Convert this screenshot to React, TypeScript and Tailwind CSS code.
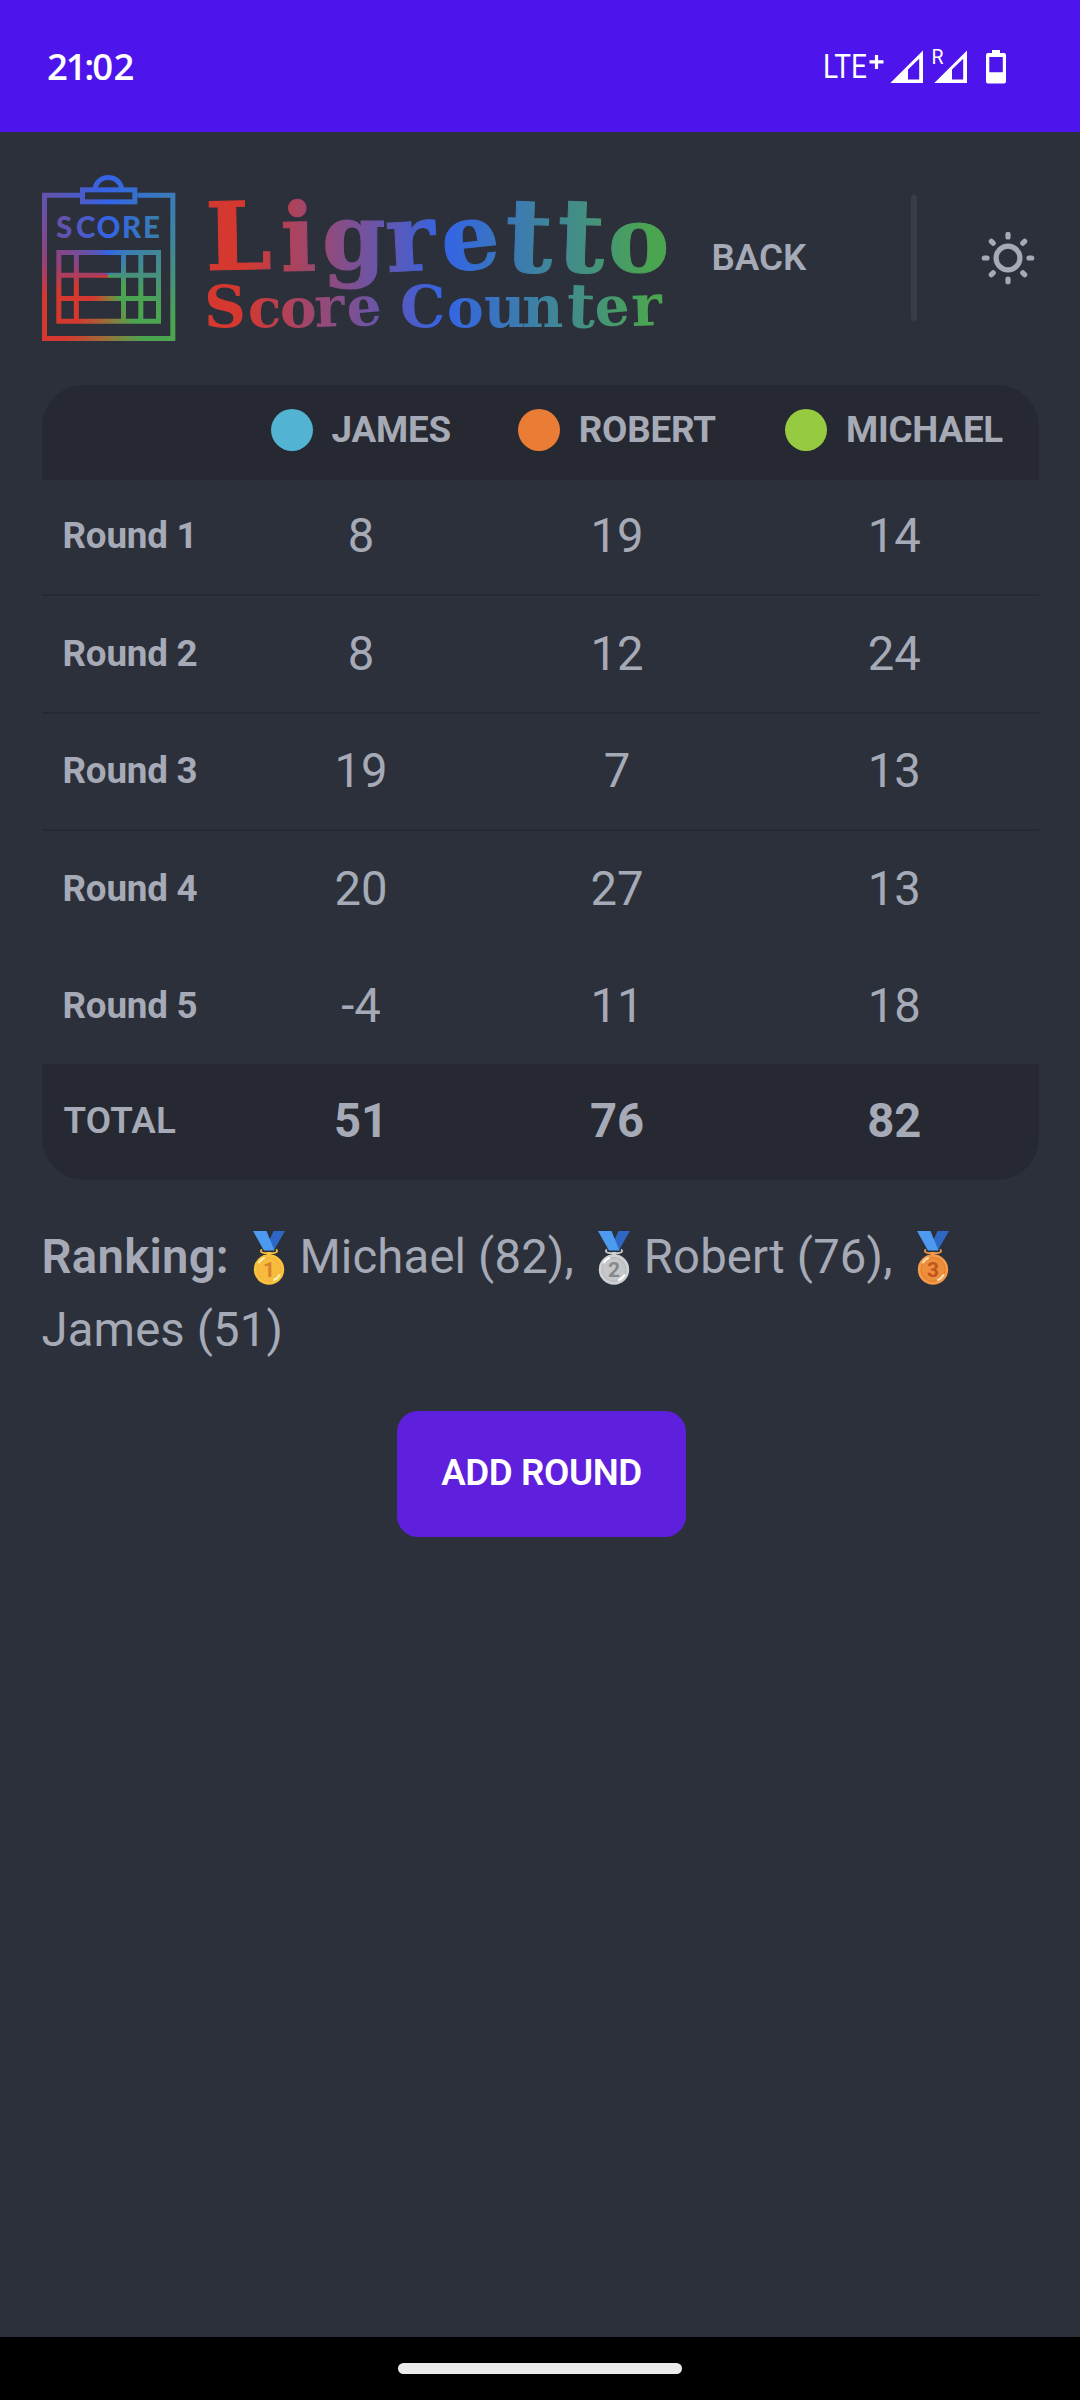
import React from "react";

type Player = { name: string; color: string; scores: number[]; total: number };

const players: Player[] = [
  { name: "James", color: "bg-[#53b3d3]", scores: [8, 8, 19, 20, -4], total: 51 },
  { name: "Robert", color: "bg-[#ea7d35]", scores: [19, 12, 7, 27, 11], total: 76 },
  { name: "Michael", color: "bg-[#95ca41]", scores: [14, 24, 13, 13, 18], total: 82 },
];

const GRID = "grid grid-cols-[196.5px_246px_266px_288.5px] items-center";

const rowHeights = [
  "h-[116.4px] border-b-2 border-[#262931] pb-[2px]",
  "h-[117.4px] border-b-2 border-[#262931] pb-[1px]",
  "h-[117.4px] border-b-2 border-[#262931] pb-[1px]",
  "h-[117.4px] pb-[2px]",
  "h-[115.4px] pb-[1px]",
];

function StatusBar() {
  return (
    <div className="flex h-[131.5px] items-center justify-between bg-[#4d14ec] pl-[47px] pr-[73px] text-white">
      <div className="flex font-['Open_Sans'] text-[36.5px] leading-[40px] font-semibold">
        <span className="tracking-[-2.2px]">21:</span>
        <span className="tracking-[0.6px]">02</span>
      </div>
      <svg width="184" height="40" viewBox="823 45 184 40" fill="#fff">
        <text x="823" y="77" fontFamily="Roboto" fontSize="33" textLength="44" lengthAdjust="spacingAndGlyphs">LTE</text>
        <path d="M869.5 59.3h14v3.200h-14zM874.900 54h3.200v14h-3.200z" />
        <path fillRule="evenodd" d="M890.3 82L923 49.6V82ZM908 78.6h11.2V57.7L908 68.5Z" />
        <text x="931.5" y="63" fontFamily="Roboto" fontSize="20.5" textLength="12" lengthAdjust="spacingAndGlyphs">R</text>
        <path fillRule="evenodd" d="M934.3 82L967 49.6V82ZM952 78.6h11.2V57.7L952 68.5Z" />
        <path fillRule="evenodd" d="M992 49h8v3h4q2 0 2 2v26.500q0 2-2 2h-16q-2 0-2-2V54q0-2 2-2h4zM989.300 56v15.300h13.500V56z" />
      </svg>
    </div>
  );
}

function Logo() {
  return (
    <svg width="626" height="170" viewBox="42 173 626 170" className="shrink-0">
      <defs>
        <linearGradient id="word" gradientUnits="userSpaceOnUse" x1="206" y1="0" x2="665" y2="0">
          <stop offset="0.08" stopColor="#d5382f" />
          <stop offset="0.52" stopColor="#3364e6" />
          <stop offset="0.97" stopColor="#4ba550" />
        </linearGradient>
        <linearGradient id="score" gradientUnits="userSpaceOnUse" x1="56" y1="0" x2="161" y2="0">
          <stop offset="0" stopColor="#6a50a4" />
          <stop offset="0.5" stopColor="#3364e6" />
          <stop offset="1" stopColor="#3b7fa8" />
        </linearGradient>
        <mask id="board" maskUnits="userSpaceOnUse" x="42" y="173" width="136" height="170">
          <g transform="translate(30 160) scale(0.33333)" fill="none" stroke="#fff" strokeWidth="15">
            <path d="M150 105.500H43.500v430h385v-430H322" />
            <rect x="157.500" y="89.500" width="157" height="36" />
            <path d="M195 85c8-43 72-43 80 0" />
            <path d="M86.500 277.500h299v206h-299zM139 277v206M280.500 277v206M332.500 277v206M86 346h300M86 415.500h300" />
          </g>
        </mask>
      </defs>
      <g mask="url(#board)">
        <foreignObject x="42" y="173" width="136" height="170">
          <div className="h-[170px] w-[136px] bg-[conic-gradient(from_0deg_at_66px_102px,#3364e6_0deg,#3b7fb0_45deg,#46907e_90deg,#4ba550_125deg,#4ba550_150deg,#9a7038_182deg,#d5382f_215deg,#d5382f_250deg,#994075_280deg,#6a50a4_315deg,#3364e6_360deg)]" />
        </foreignObject>
      </g>
      <text x="56 76 96.500 122 143" y="237.500" fontFamily="Lato" fontWeight="900" fontSize="29.500" fill="url(#score)">SCORE</text>
      <text
        x="206 281 322 387 444 504 556 608"
        y="270 271 269 272 272 271 271 272"
        rotate="-1 -1 0 -3 -6 2 2 0"
        fontFamily="DejaVu Serif"
        fontWeight="bold"
        fontSize="95"
        fill="url(#word)"
        stroke="url(#word)"
        strokeWidth="1"
      >
        <tspan fontSize="94">L</tspan>
        <tspan fontSize="94">i</tspan>
        <tspan fontSize="91">g</tspan>
        <tspan fontSize="94">r</tspan>
        <tspan fontSize="92">e</tspan>
        <tspan fontSize="103">tt</tspan>
        <tspan fontSize="92">o</tspan>
      </text>
      <text
        x="204 248 280 315 348 387 400 447 484 522 566 596 632"
        y="327 327 327 327 327 327 327 327 327 327 327 327 326"
        rotate="0 0 0 -2 -5 0 0 0 0 0 2 -5 -2"
        fontFamily="DejaVu Serif"
        fontWeight="bold"
        fontSize="56"
        fill="url(#word)"
      >
        <tspan fontSize="58">S</tspan>
        <tspan fontSize="55">co</tspan>
        <tspan fontSize="57">r</tspan>
        <tspan fontSize="55">e </tspan>
        <tspan fontSize="57">C</tspan>
        <tspan fontSize="55">o</tspan>
        <tspan fontSize="57">un</tspan>
        <tspan fontSize="62">t</tspan>
        <tspan fontSize="55">e</tspan>
        <tspan fontSize="58">r</tspan>
      </text>
    </svg>
  );
}

function SunIcon() {
  return (
    <svg width="54" height="54" viewBox="-27 -27 54 54" fill="none" stroke="#a6aab6" strokeWidth="5.200" strokeLinecap="round">
      <circle r="11.900" />
      <path d="M0-23.700v2.700M0 23.700v-2.700M-23.700 0h2.700M23.700 0h-2.700M-16.700-16.700l1.900 1.900M16.700-16.700l-1.900 1.900M-16.700 16.700l1.900-1.900M16.700 16.700l-1.900-1.900" />
    </svg>
  );
}

function Header() {
  return (
    <header className="flex h-[253px] items-center pl-[42px]">
      <Logo />
      <span className="ml-[43.500px] text-[36.75px] leading-[52px] font-semibold">BACK</span>
      <div className="ml-auto h-[126px] w-[6px] rounded-full bg-[#3a3c48]" />
      <div className="mr-[45px] ml-[64.500px]">
        <SunIcon />
      </div>
    </header>
  );
}

function ScoreTable() {
  return (
    <section className="mx-[41.500px] w-[997px]">
      <div className={`${GRID} h-[95.5px] rounded-t-[42px] bg-[#262931] pb-[4px]`}>
        <span />
        {players.map((p) => (
          <div key={p.name} className="flex items-center justify-center gap-[18.500px]">
            <span className={`size-[42px] rounded-full ${p.color}`} />
            <span className="text-[36.75px] leading-[42px] font-bold tracking-[-0.2px] uppercase">{p.name}</span>
          </div>
        ))}
      </div>
      {rowHeights.map((height, r) => (
        <div key={r} className={`${GRID} ${height}`}>
          <span className="pl-[21px] text-[36.75px] leading-[52px] font-bold tracking-[-0.2px]">Round {r + 1}</span>
          {players.map((p) => (
            <span key={p.name} className="text-center text-[47.25px] leading-[56px]">
              {p.scores[r]}
            </span>
          ))}
        </div>
      ))}
      <div className={`${GRID} h-[116.5px] rounded-b-[42px] bg-[#262931] pb-[2px]`}>
        <span className="pl-[22px] text-[36.75px] leading-[52px] font-semibold tracking-[0.2px]">TOTAL</span>
        {players.map((p) => (
          <span key={p.name} className="text-center text-[47.25px] leading-[56px] font-bold">
            {p.total}
          </span>
        ))}
      </div>
    </section>
  );
}

const medals = [
  { disc: "#f9c23c", inner: "#f5b440", digit: "#d9822b", shine: "#fff3b0" },
  { disc: "#cfd1d3", inner: "#b9bbbd", digit: "#85888b", shine: "#ffffff" },
  { disc: "#f2994a", inner: "#e5802c", digit: "#c2541b", shine: "#ffe0b8" },
];

function Medal({ rank, className }: { rank: number; className: string }) {
  const c = medals[rank - 1];
  return (
    <svg width="32" height="54" viewBox="0 0 32 54" className={`inline-block align-[-12px] ${className}`}>
      <path d="M20.500 0H32L21 19h-9z" fill="#2f68c4" />
      <path d="M0 0h13.500l8 19.500H11z" fill="#4c9bf0" />
      <path d="M9 18.500c-3 2 0 4 4 3.600h6c4 .4 7-1.600 4-3.600" fill="none" stroke={c.disc} strokeWidth="1.600" />
      <path d="M14 21h4v5h-4z" fill={c.disc} />
      <circle cx="16" cy="38.500" r="15.200" fill={c.disc} />
      <circle cx="16" cy="38.500" r="11.800" fill={c.inner} fillOpacity="0.45" stroke={c.inner} strokeWidth="1.200" />
      <path d="M6 31.500a12 12 0 0 1 5-4.500M26.500 44a12 12 0 0 1-5.500 5" stroke={c.shine} strokeWidth="2" fill="none" strokeLinecap="round" />
      <text x="16" y="46" textAnchor="middle" fontFamily="Roboto" fontWeight="bold" fontSize="21" letterSpacing="0" fill={c.digit}>
        {rank}
      </text>
    </svg>
  );
}

function Ranking() {
  return (
    <p className="mt-[41px] ml-[41.500px] w-[997px] text-[47.25px] leading-[73px] tracking-[0.15px]">
      <span className="font-semibold tracking-[0.3px]">Ranking:</span> <Medal rank={1} className="mr-[14px] ml-[12.500px]" />
      Michael (82), <Medal rank={2} className="mr-[13.500px] ml-[12.500px]" />
      Robert (76), <Medal rank={3} className="mr-[13px] ml-[13px]" />
      <br />
      James (51)
    </p>
  );
}

export default function App() {
  return (
    <div className="flex h-[2400px] w-[1080px] flex-col overflow-hidden bg-[#2b303b] font-['Roboto',sans-serif] text-[#a6aab6]">
      <StatusBar />
      <Header />
      <ScoreTable />
      <Ranking />
      <button className="mt-[44px] ml-[397px] h-[126px] w-[289px] rounded-[21px] bg-[#5e20dc] pb-[3px] text-[36.75px] font-semibold tracking-[-0.4px] text-white">
        ADD ROUND
      </button>
      <div className="mt-auto flex h-[63px] items-start justify-center bg-black pt-[26px]">
        <div className="h-[11px] w-[284px] rounded-full bg-[#ebebeb]" />
      </div>
    </div>
  );
}
